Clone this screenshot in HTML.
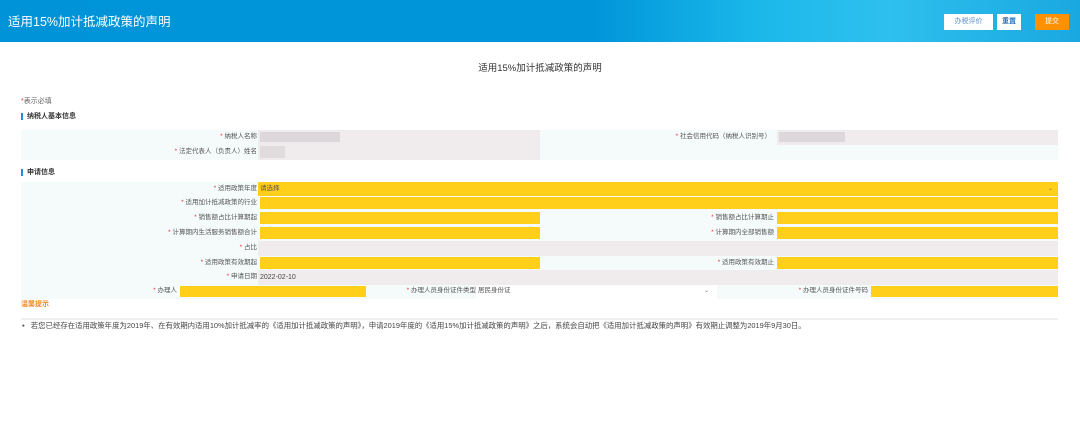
<!DOCTYPE html>
<html><head><meta charset="utf-8"><style>
*{margin:0;padding:0;box-sizing:border-box}
body{width:1080px;height:421px;background:#fff;font-family:"Liberation Sans","Noto Sans CJK SC",sans-serif;position:relative;overflow:hidden;color:#333}
.a{position:absolute}
.hdr{left:0;top:0;width:1080px;height:42px;background:linear-gradient(90deg,#0093d8 0%,#0095d9 55%,#1ab8ea 70%,#2ec0ee 82%,#1aa8e0 100%)}
.btn{top:14px;height:16px;font-size:7px;line-height:16px;text-align:center}
.lbl{font-size:6.5px;color:#555;text-align:right;line-height:14px}
.lbl b{color:#e33;font-weight:normal}
.y{background:#ffcf1a}
.g{background:#f0ecee}
.bg{background:#f5fafb}
</style></head><body>
<div class="a hdr"></div>
<div class="a" style="left:8px;top:14px;font-size:12.5px;color:#fff;line-height:16px">适用15%加计抵减政策的声明</div>
<div class="a btn" style="left:944px;width:49px;background:#fff;color:#5a8fc7">办税评价</div>
<div class="a btn" style="left:997px;width:24px;background:#fff;color:#2a6fb5;font-weight:bold">重置</div>
<div class="a btn" style="left:1035px;width:34px;background:#ff9000;color:#fff">提交</div>
<div class="a" style="left:0;width:1080px;top:60px;text-align:center;font-size:9.5px;color:#333">适用15%加计抵减政策的声明</div>
<div class="a" style="left:21px;top:96px;font-size:7px;color:#666"><span style="color:#e33">*</span>表示必填</div>
<div class="a" style="left:21px;top:113px;width:2px;height:7px;background:#1a8ee0"></div>
<div class="a" style="left:27px;top:111px;font-size:7px;font-weight:bold;color:#333">纳税人基本信息</div>
<div class="a bg" style="left:21px;top:130px;width:1037px;height:30px"></div>
<div class="a g" style="left:258px;top:130px;width:282px;height:30px"></div>
<div class="a g" style="left:777px;top:130px;width:281px;height:15px"></div>
<div class="a" style="left:260px;top:132px;width:80px;height:10px;background:#d6d2d4;opacity:.8"></div>
<div class="a" style="left:260px;top:146px;width:25px;height:12px;background:#dcd8da;opacity:.8"></div>
<div class="a" style="left:779px;top:132px;width:66px;height:10px;background:#d6d2d4;opacity:.8"></div>
<div class="a lbl" style="left:21px;width:236px;top:130px"><b>*</b> 纳税人名称</div>
<div class="a lbl" style="left:21px;width:236px;top:145px"><b>*</b> 法定代表人（负责人）姓名</div>
<div class="a lbl" style="left:540px;width:231px;top:130px"><b>*</b> 社会信用代码（纳税人识别号）</div>
<div class="a" style="left:21px;top:169px;width:2px;height:7px;background:#1a8ee0"></div>
<div class="a" style="left:27px;top:167px;font-size:7px;font-weight:bold;color:#333">申请信息</div>
<div class="a bg" style="left:21px;top:182px;width:1037px;height:117px"></div>
<div class="a y" style="left:258px;top:182px;width:800px;height:14px"></div>
<div class="a" style="left:260px;top:182px;font-size:6.5px;line-height:14px;color:#555">请选择</div>
<div class="a" style="left:1048px;top:182px;font-size:6px;line-height:14px;color:#777">⌄</div>
<div class="a lbl" style="left:21px;width:236px;top:182px"><b>*</b> 适用政策年度</div>
<div class="a y" style="left:260px;top:197px;width:798px;height:12px"></div>
<div class="a lbl" style="left:21px;width:236px;top:196px"><b>*</b> 适用加计抵减政策的行业</div>
<div class="a y" style="left:260px;top:212px;width:280px;height:12px"></div>
<div class="a y" style="left:777px;top:212px;width:281px;height:12px"></div>
<div class="a lbl" style="left:21px;width:236px;top:211px"><b>*</b> 销售额占比计算期起</div>
<div class="a lbl" style="left:540px;width:234px;top:211px"><b>*</b> 销售额占比计算期止</div>
<div class="a y" style="left:260px;top:227px;width:280px;height:12px"></div>
<div class="a y" style="left:777px;top:227px;width:281px;height:12px"></div>
<div class="a lbl" style="left:21px;width:236px;top:226px"><b>*</b> 计算期内生活服务销售额合计</div>
<div class="a lbl" style="left:540px;width:234px;top:226px"><b>*</b> 计算期内全部销售额</div>
<div class="a g" style="left:258px;top:241px;width:800px;height:15px"></div>
<div class="a lbl" style="left:21px;width:236px;top:241px"><b>*</b> 占比</div>
<div class="a y" style="left:260px;top:257px;width:280px;height:12px"></div>
<div class="a y" style="left:777px;top:257px;width:281px;height:12px"></div>
<div class="a lbl" style="left:21px;width:236px;top:256px"><b>*</b> 适用政策有效期起</div>
<div class="a lbl" style="left:540px;width:234px;top:256px"><b>*</b> 适用政策有效期止</div>
<div class="a g" style="left:258px;top:270px;width:800px;height:15px"></div>
<div class="a" style="left:260px;top:270px;font-size:7px;line-height:15px;color:#444">2022-02-10</div>
<div class="a lbl" style="left:21px;width:236px;top:270px"><b>*</b> 申请日期</div>
<div class="a y" style="left:180px;top:286px;width:186px;height:11px"></div>
<div class="a lbl" style="left:21px;width:156px;top:284px"><b>*</b> 办理人</div>
<div class="a" style="left:476px;top:285px;width:241px;height:14px;background:#fff"></div>
<div class="a lbl" style="left:366px;width:110px;top:284px"><b>*</b> 办理人员身份证件类型</div>
<div class="a" style="left:478px;top:284px;font-size:6.5px;line-height:14px;color:#555">居民身份证</div>
<div class="a" style="left:704px;top:284px;font-size:6px;line-height:14px;color:#777">⌄</div>
<div class="a lbl" style="left:717px;width:151px;top:284px"><b>*</b> 办理人员身份证件号码</div>
<div class="a y" style="left:871px;top:286px;width:187px;height:11px"></div>
<div class="a" style="left:21px;top:299px;font-size:7px;font-weight:bold;color:#f08a24">温馨提示</div>
<div class="a" style="left:21px;top:318px;width:1037px;height:2px;background:#f0f0f0"></div>
<div class="a" style="left:22px;top:320px;font-size:7.4px;line-height:12px;color:#444;white-space:nowrap">▪&nbsp;&nbsp;&nbsp;若您已经存在适用政策年度为2019年、在有效期内适用10%加计抵减率的《适用加计抵减政策的声明》，申请2019年度的《适用15%加计抵减政策的声明》之后，系统会自动把《适用加计抵减政策的声明》有效期止调整为2019年9月30日。</div>
</body></html>
